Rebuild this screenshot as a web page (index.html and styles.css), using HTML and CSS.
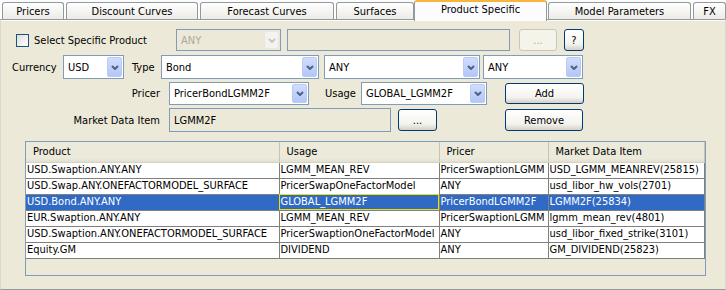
FILE: index.html
```html
<!DOCTYPE html>
<html lang="en">
<head>
    <meta charset="UTF-8">
    <title>Product Specific</title>
    <link rel="stylesheet" href="styles.css">
</head>
<body>

    <div class="tabs">
        <div class="tab tab-pricers">Pricers</div>
        <div class="tab tab-discount">Discount Curves</div>
        <div class="tab tab-forecast">Forecast Curves</div>
        <div class="tab tab-surfaces">Surfaces</div>
        <div class="tab tab-product active">Product Specific</div>
        <div class="tab tab-model">Model Parameters</div>
        <div class="tab tab-fx">FX</div>
    </div>

    <div class="panel">
        <div class="row row-select">
            <label class="check-label">
                <span class="checkbox"></span>
                Select Specific Product
            </label>
            <div class="combo combo-any disabled">
                <span class="combo-text">ANY</span>
                <span class="combo-arrow"><svg width="8" height="5" viewBox="0 0 8 5"><path d="M1 1 L4 4 L7 1" /></svg></span>
            </div>
            <div class="field field-product disabled"></div>
            <button class="btn btn-dots-top" disabled>...</button>
            <button class="btn btn-help">?</button>
        </div>

        <div class="row row-type">
            <span class="lbl lbl-currency">Currency</span>
            <div class="combo combo-ccy">
                <span class="combo-text">USD</span>
                <span class="combo-arrow"><svg width="8" height="5" viewBox="0 0 8 5"><path d="M1 1 L4 4 L7 1" /></svg></span>
            </div>
            <span class="lbl lbl-type">Type</span>
            <div class="combo combo-type">
                <span class="combo-text">Bond</span>
                <span class="combo-arrow"><svg width="8" height="5" viewBox="0 0 8 5"><path d="M1 1 L4 4 L7 1" /></svg></span>
            </div>
            <div class="combo combo-sub1">
                <span class="combo-text">ANY</span>
                <span class="combo-arrow"><svg width="8" height="5" viewBox="0 0 8 5"><path d="M1 1 L4 4 L7 1" /></svg></span>
            </div>
            <div class="combo combo-sub2">
                <span class="combo-text">ANY</span>
                <span class="combo-arrow"><svg width="8" height="5" viewBox="0 0 8 5"><path d="M1 1 L4 4 L7 1" /></svg></span>
            </div>
        </div>

        <div class="row row-pricer">
            <span class="lbl lbl-right">Pricer</span>
            <div class="combo combo-pricer">
                <span class="combo-text">PricerBondLGMM2F</span>
                <span class="combo-arrow"><svg width="8" height="5" viewBox="0 0 8 5"><path d="M1 1 L4 4 L7 1" /></svg></span>
            </div>
            <span class="lbl lbl-usage">Usage</span>
            <div class="combo combo-usage">
                <span class="combo-text">GLOBAL_LGMM2F</span>
                <span class="combo-arrow"><svg width="8" height="5" viewBox="0 0 8 5"><path d="M1 1 L4 4 L7 1" /></svg></span>
            </div>
            <button class="btn btn-add">Add</button>
        </div>

        <div class="row row-mdi">
            <span class="lbl lbl-right">Market Data Item</span>
            <div class="field field-mdi disabled">LGMM2F</div>
            <button class="btn btn-dots">...</button>
            <button class="btn btn-remove">Remove</button>
        </div>

        <div class="grid-wrap">
            <table class="grid">
                <colgroup>
                    <col class="c-product">
                    <col class="c-usage">
                    <col class="c-pricer">
                    <col class="c-mdi">
                </colgroup>
                <thead>
                    <tr>
                        <th>Product</th>
                        <th>Usage</th>
                        <th>Pricer</th>
                        <th>Market Data Item</th>
                    </tr>
                </thead>
                <tbody>
                    <tr>
                        <td>USD.Swaption.ANY.ANY</td>
                        <td>LGMM_MEAN_REV</td>
                        <td>PricerSwaptionLGMM</td>
                        <td>USD_LGMM_MEANREV(25815)</td>
                    </tr>
                    <tr>
                        <td>USD.Swap.ANY.ONEFACTORMODEL_SURFACE</td>
                        <td>PricerSwapOneFactorModel</td>
                        <td>ANY</td>
                        <td>usd_libor_hw_vols(2701)</td>
                    </tr>
                    <tr class="selected">
                        <td>USD.Bond.ANY.ANY</td>
                        <td class="focus">GLOBAL_LGMM2F</td>
                        <td>PricerBondLGMM2F</td>
                        <td>LGMM2F(25834)</td>
                    </tr>
                    <tr>
                        <td>EUR.Swaption.ANY.ANY</td>
                        <td>LGMM_MEAN_REV</td>
                        <td>PricerSwaptionLGMM</td>
                        <td>lgmm_mean_rev(4801)</td>
                    </tr>
                    <tr>
                        <td>USD.Swaption.ANY.ONEFACTORMODEL_SURFACE</td>
                        <td>PricerSwaptionOneFactorModel</td>
                        <td>ANY</td>
                        <td>usd_libor_fixed_strike(3101)</td>
                    </tr>
                    <tr>
                        <td>Equity.GM</td>
                        <td>DIVIDEND</td>
                        <td>ANY</td>
                        <td>GM_DIVIDEND(25823)</td>
                    </tr>
                </tbody>
            </table>
        </div>
    </div>

</body>
</html>
```

FILE: styles.css
```css
body {
    font-family: "DejaVu Sans Condensed", "DejaVu Sans", sans-serif;
    font-size: 11px;
    margin: 0;
    padding: 0;
    background-color: #fcfcfe;
    width: 726px;
    height: 290px;
    overflow: hidden;
    color: #000;
}

/* tab strip */
.tabs {
    display: flex;
    align-items: flex-end;
    height: 19px;
    padding-left: 2px;
    gap: 2px;
    position: relative;
    z-index: 1;
}

.tab {
    height: 17px;
    box-sizing: border-box;
    border: 1px solid #919b9c;
    border-bottom: none;
    border-radius: 3px 3px 0 0;
    background: linear-gradient(#ffffff, #ecebe6);
    text-align: center;
    line-height: 17px;
}

.tab.active {
    height: 21px;
    margin-bottom: -2px;
    border-top: 2px solid #f7b53a;
    background: #fcfcfe;
    line-height: 16px;
}

.tab-pricers { width: 62px; }
.tab-discount { width: 132px; }
.tab-forecast { width: 134px; }
.tab-surfaces { width: 78px; margin-right: -2px; }
.tab-product { width: 133px; }
.tab-model { width: 143px; margin-left: -1px; }
.tab-fx { width: 33px; }

.panel {
    height: 271px;
    box-sizing: border-box;
    border-top: 1px solid #919b9c;
    border-bottom: 1px solid #919b9c;
    border-left: 1px solid #d8d7d0;
    border-right: 1px solid #d8d7d0;
    background-color: #ece9d8;
    box-shadow: inset 0 1px 0 #fcfcfe;
    padding-top: 9px;
}

.row {
    display: flex;
    align-items: center;
}

.row-select { height: 22px; }
.row-type { height: 24px; margin-top: 4px; }
.row-pricer { height: 23px; margin-top: 3px; }
.row-mdi { height: 24px; margin-top: 3px; }

.lbl {
    white-space: nowrap;
}

.lbl-right {
    width: 159px;
    text-align: right;
    margin-right: 9px;
}

.lbl-currency { margin-left: 11px; width: 51px; }
.lbl-type { margin-left: 8px; width: 29px; }
.lbl-usage { margin-left: 16px; width: 36px; }

/* checkbox */
.check-label {
    display: flex;
    align-items: center;
    margin-left: 15px;
    width: 159px;
    white-space: nowrap;
}

.checkbox {
    width: 11px;
    height: 11px;
    border: 1px solid #1c5180;
    background: linear-gradient(135deg, #dcdcd7, #ffffff);
    margin-right: 5px;
}

/* combo boxes */
.combo {
    display: flex;
    align-items: center;
    box-sizing: border-box;
    border: 1px solid #7f9db9;
    background-color: #fff;
    height: 100%;
    padding: 1px;
}

.combo-text {
    flex: 1;
    padding-left: 3px;
    white-space: nowrap;
    overflow: hidden;
}

.combo-arrow {
    width: 15px;
    height: 100%;
    box-sizing: border-box;
    border: 1px solid #b9cbf3;
    border-radius: 2px;
    background: linear-gradient(#d0ddfd, #b3c6f6);
    display: flex;
    align-items: center;
    justify-content: center;
}

.combo-arrow path {
    fill: none;
    stroke: #4d6185;
    stroke-width: 2;
}

.combo.disabled {
    background-color: #ece9d8;
    color: #aca899;
}

.combo.disabled .combo-arrow {
    border-color: #e8e8e2;
    background: #f4f3ef;
}

.combo.disabled .combo-arrow path {
    stroke: #c9c7ba;
}

.combo-any { width: 105px; margin-left: 1px; }
.combo-ccy { width: 61px; }
.combo-type { width: 158px; }
.combo-sub1 { width: 156px; margin-left: 5px; }
.combo-sub2 { width: 100px; margin-left: 3px; }
.combo-pricer { width: 140px; }
.combo-usage { width: 126px; }

/* text fields */
.field {
    box-sizing: border-box;
    border: 1px solid #7f9db9;
    height: 100%;
    background-color: #fff;
    padding-left: 4px;
    display: flex;
    align-items: center;
}

.field.disabled { background-color: #ece9d8; }

.field-product { width: 223px; margin-left: 6px; }
.field-mdi { width: 222px; }

/* buttons */
.btn {
    font-family: inherit;
    font-size: 11px;
    box-sizing: border-box;
    border: 1px solid #003c74;
    border-radius: 3px;
    background: linear-gradient(#ffffff 0%, #f3f3ef 70%, #d6d0c5 100%);
    color: #000;
    padding: 0;
    height: 22px;
}

.btn:disabled {
    border-color: #c9c7ba;
    background: #f5f4ea;
    color: #aca899;
}

.btn-dots-top { width: 38px; margin-left: 9px; }
.btn-help { width: 20px; margin-left: 7px; }
.btn-add { width: 79px; margin-left: 18px; height: 21px; }
.btn-dots { width: 39px; margin-left: 7px; }
.btn-remove { width: 78px; margin-left: 68px; }

/* grid */
.grid-wrap {
    margin: 9px 0 0 24px;
    width: 681px;
    height: 135px;
    box-sizing: border-box;
    border: 1px solid #7f9db9;
    background-color: #ece9d8;
}

.grid {
    border-collapse: collapse;
    table-layout: fixed;
    width: 678px;
}

.c-product { width: 253px; }
.c-usage { width: 160px; }
.c-pricer { width: 109px; }
.c-mdi { width: 156px; }

.grid th {
    height: 20px;
    padding: 0 0 0 7px;
    font-weight: normal;
    text-align: left;
    background: linear-gradient(#ebeadb 80%, #e2dfcf);
    border-right: 1px solid #c7c5b2;
    border-bottom: 1px solid #d6d2c2;
    box-sizing: border-box;
}

.grid td {
    height: 16px;
    padding: 0 0 0 1px;
    background-color: #fff;
    border-right: 1px solid #808080;
    border-bottom: 1px solid #808080;
    white-space: nowrap;
    overflow: hidden;
    box-sizing: border-box;
    line-height: 14px;
}

.grid tr.selected td {
    background-color: #316ac5;
    color: #fff;
}

.grid tr.selected td.focus {
    outline: 1px solid #f0e000;
    outline-offset: -1px;
}
```
